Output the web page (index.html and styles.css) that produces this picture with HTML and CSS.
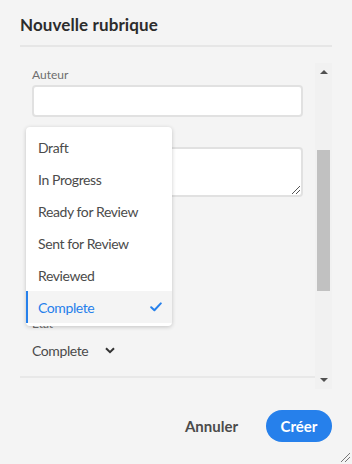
FILE: index.html
```html
<!DOCTYPE html>
<html lang="fr">
<head>
    <meta charset="UTF-8">
    <title>Nouvelle rubrique</title>
    <link rel="stylesheet" href="styles.css">
</head>
<body>
<div class="dialog">
    <h1 class="dlg-title">Nouvelle rubrique</h1>
    <div class="dlg-body">
        <div class="form">
            <div class="field">
                <label class="lbl">Auteur</label>
                <input class="txt" type="text">
            </div>
            <div class="field">
                <label class="lbl hid">Description</label>
                <div class="area"><span class="grip"></span></div>
            </div>
            <div class="field field-date">
                <label class="lbl hid">Date</label>
            </div>
            <div class="field">
                <label class="lbl">Etat</label>
                <div class="picker">
                    <span>Complete</span>
                    <svg width="10" height="7" viewBox="0 0 10 7"><path d="M1 1.2 5 5.2 9 1.2" fill="none" stroke="#323232" stroke-width="2"/></svg>
                </div>
            </div>

            <!-- menu ouvert sur le champ Etat -->
            <ul class="menu">
                <li>Draft</li>
                <li>In Progress</li>
                <li>Ready for Review</li>
                <li>Sent for Review</li>
                <li>Reviewed</li>
                <li class="sel">Complete
                    <svg width="12" height="10" viewBox="0 0 12 10"><path d="M1.2 5.2 4.4 8.2 10.8 1.4" fill="none" stroke="#2680eb" stroke-width="2" stroke-linecap="round" stroke-linejoin="round"/></svg>
                </li>
            </ul>
        </div>
        <div class="sbar">
            <span class="arr up"></span>
            <div class="track"><div class="thumb"></div></div>
            <span class="arr down"></span>
        </div>
    </div>
    <div class="dlg-foot">
        <button class="btn btn-quiet">Annuler</button>
        <button class="btn btn-cta">Créer</button>
    </div>
    <span class="corner"></span>
</div>
</body>
</html>
```

FILE: styles.css
```css
*{margin: 0;padding: 0;box-sizing: border-box;}
li{list-style: none;}
body{background: #f4f4f4;font-family: Lato, "Open Sans", sans-serif;color: #4b4b4b;}
.dialog{width: 352px;height: 464px;position: relative;padding: 0 20px;display: flex;flex-direction: column;}

.dlg-title{height: 47px;padding-top: 14px;font-size: 17px;font-weight: 700;color: #2c2c2c;border-bottom: 2px solid #e6e6e6;letter-spacing: .1px;}

.dlg-body{height: 326px;margin-top: 16px;display: flex;}
.form{flex: 1;position: relative;padding: 4px 12px 0;border-bottom: 2px solid #e8e8e8;margin-bottom: 11px;}
.field{display: flex;flex-direction: column;}
.lbl{font-size: 12px;line-height: 15px;color: #6e6e6e;margin-bottom: 3px;}
.hid{visibility: hidden;}
.txt{height: 32px;width: 100%;background: #fff;border: 2px solid #e1e1e1;border-radius: 4px;}
.field + .field{margin-top: 12px;}
.area{height: 50px;background: #fff;border: 2px solid #e1e1e1;border-radius: 4px;position: relative;}
.grip{position: absolute;right: 1px;bottom: 1px;width: 8px;height: 8px;
    background: linear-gradient(135deg, transparent 45%, #555 45%, #555 55%, transparent 55%, transparent 70%, #555 70%, #555 80%, transparent 80%);}
.field-date{height: 95px;}
.picker{display: flex;align-items: center;gap: 17px;height: 32px;font-size: 14px;letter-spacing: -.4px;color: #4b4b4b;}

.menu{position: absolute;left: 6px;top: 64px;width: 146px;padding: 4px 0 3px;background: #fff;border-radius: 4px;
    box-shadow: 0 1px 4px rgba(0,0,0,.2);}
.menu li{height: 32px;padding-left: 12px;padding-right: 10px;font-size: 14px;letter-spacing: -.4px;color: #4b4b4b;
    display: flex;align-items: center;justify-content: space-between;}
.menu .sel{background: #f4f4f4;color: #2680eb;border-left: 2px solid #2680eb;padding-left: 10px;}

.sbar{width: 17px;background: #f1f1f1;display: flex;flex-direction: column;align-items: center;}
.arr{width: 0;height: 0;border-left: 4px solid transparent;border-right: 4px solid transparent;margin: 7px 0;}
.arr.up{border-bottom: 4px solid #505050;}
.arr.down{border-top: 4px solid #505050;}
.track{flex: 1;width: 13px;padding-top: 69px;}
.thumb{height: 141px;background: #c1c1c1;}

.dlg-foot{display: flex;justify-content: flex-end;align-items: center;gap: 28px;padding-top: 21px;}
.btn{border: none;font-family: inherit;font-size: 15px;font-weight: 700;height: 32px;cursor: pointer;}
.btn-quiet{background: none;color: #4b4b4b;}
.btn-cta{background: #2680eb;color: #fff;border-radius: 16px;width: 66px;}

.corner{position: absolute;right: 2px;bottom: 2px;width: 9px;height: 9px;
    background: linear-gradient(135deg, transparent 45%, #777 45%, #777 52%, transparent 52%, transparent 70%, #777 70%, #777 77%, transparent 77%);}
```
